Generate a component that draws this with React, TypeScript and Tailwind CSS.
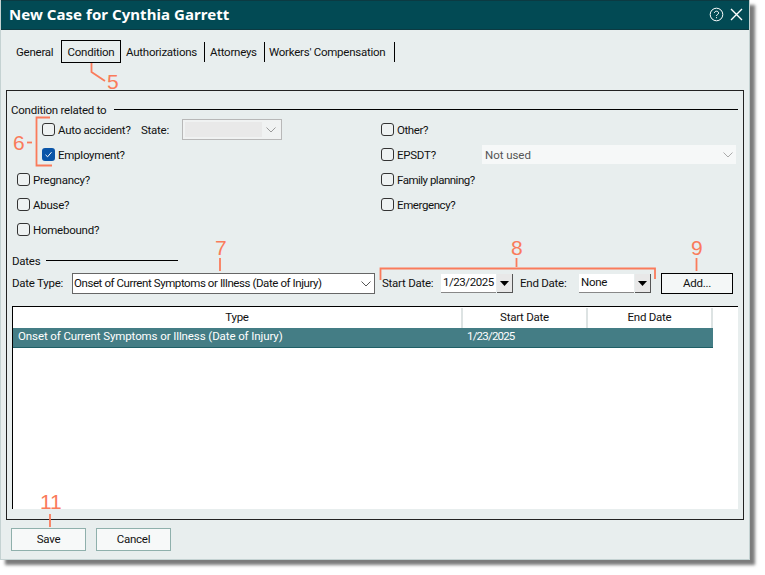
import React from "react";

const ORANGE = "#FA7B5B";

function Check({ label, checked = false, className = "", labelClass = "" }: { label: string; checked?: boolean; className?: string; labelClass?: string }) {
  return (
    <div className={`flex items-center h-[25px] gap-[3px] ${className}`}>
      {checked ? (
        <span className="w-[13px] h-[13px] rounded-[3px] bg-[#0A55A8] flex items-center justify-center shrink-0">
          <svg width="9" height="9" viewBox="0 0 9 9" fill="none" stroke="#fff" strokeWidth="1">
            <path d="M1.5 4.8 L3.6 6.8 L7.5 2.2" />
          </svg>
        </span>
      ) : (
        <span className="w-[13px] h-[13px] rounded-[3px] border border-[#333] bg-[#eef2f2] shrink-0" />
      )}
      <span className={`pt-[2px] ${labelClass}`}>{label}</span>
    </div>
  );
}

function Chevron({ color = "#555" }: { color?: string }) {
  return (
    <svg width="10" height="6" viewBox="0 0 10 6" fill="none" stroke={color} strokeWidth="1" className="shrink-0">
      <path d="M0.5 0.5 L5 5 L9.5 0.5" />
    </svg>
  );
}

function DropButton() {
  return (
    <span className="w-[16px] h-[19px] bg-[#e8e8e8] border-r border-b border-[#555] flex items-center justify-center">
      <svg width="9" height="5" viewBox="0 0 9 5">
        <path d="M0 0 H9 L4.5 5 Z" fill="#000" />
      </svg>
    </span>
  );
}

function Num({ children, className }: { children: React.ReactNode; className: string }) {
  return (
    <span className={`absolute text-[#FA7B5B] text-[21px] leading-[20px] tracking-normal font-['Liberation_Sans',sans-serif] ${className}`}>
      {children}
    </span>
  );
}

export default function App() {
  return (
    <div className="relative w-[765px] h-[575px] bg-white overflow-hidden font-['Roboto','Noto_Sans',sans-serif] text-[11.5px] tracking-[-0.25px] text-[#111] whitespace-nowrap">
      <div className="w-[750px] h-[560px] bg-[#E8EEEE] border-r border-b border-l border-[#C4D2D2] shadow-[5px_5px_3px_#7c7c7c] flex flex-col">
        <div className="h-[30px] shrink-0 bg-[#024A54] border-t border-b border-[#0c3a42] flex items-center justify-between pl-[8px] pr-[6px] pb-[1px] font-['Noto_Sans',sans-serif]">
          <span className="text-white font-bold text-[15px] tracking-[0.05px]">New Case for Cynthia Garrett</span>
          <span className="flex items-center gap-[6px]">
            <svg width="15" height="15" viewBox="0 0 15 15" fill="none" stroke="#fff" strokeWidth="1">
              <circle cx="7.5" cy="7.5" r="6.3" />
              <path d="M5.4 6 C5.4 3.6 9.6 3.6 9.6 6 C9.6 7.5 7.5 7.4 7.5 9" />
              <path d="M7.5 10.2 V11.2" />
            </svg>
            <svg width="13" height="13" viewBox="0 0 13 13" fill="none" stroke="#fff" strokeWidth="1.4">
              <path d="M1 1 L12 12 M12 1 L1 12" />
            </svg>
          </span>
        </div>

        <div className="flex items-center h-[23px] mt-[10px] pl-[15px] shrink-0">
          <span className="w-[45px] pt-[2px]">General</span>
          <span className="w-[60px] h-[23px] border border-black flex items-center justify-center pt-[2px]">Condition</span>
          <span className="w-[84px] pl-[5px] h-[20px] flex items-center border-r border-black pt-[2px]">Authorizations</span>
          <span className="w-[60px] pl-[5px] h-[20px] flex items-center border-r border-black pt-[2px]">Attorneys</span>
          <span className="w-[130px] pl-[4px] h-[20px] flex items-center border-r border-black pt-[2px]">Workers' Compensation</span>
        </div>

        <div className="ml-[5px] mt-[27px] w-[738px] h-[430px] border border-[#222] flex flex-col">
          <div className="flex items-center h-[15px] mt-[11px] pl-[4px] pr-[5px] gap-[6px] shrink-0">
            <span className="w-[97px] pt-[2px]">Condition related to</span>
            <span className="flex-1 h-px bg-black" />
          </div>
          <div className="grid grid-cols-[374px_1fr] shrink-0">
            <div className="flex items-center pl-[35px]">
              <Check label="Auto accident?" className="w-[99px]" />
              <span className="w-[41px] pt-[2px]">State:</span>
              <div className="w-[100px] h-[21px] border border-[#b8b8b8] bg-[#F0F2F2] flex items-center justify-between p-[2px] pr-[5px]">
                <span className="w-[77px] h-[15px] bg-[#E9E9E9]" />
                <Chevron color="#999" />
              </div>
            </div>
            <Check label="Other?" labelClass="tracking-[-0.4px]" />
            <Check label="Employment?" className="pl-[35px]" checked />
            <div className="flex items-center">
              <Check label="EPSDT?" className="w-[101px]" />
              <div className="w-[254px] h-[19px] bg-[#F6F8F8] flex items-center justify-between pl-[3px] pr-[3px] text-[#555] text-[11.5px] tracking-[-0.05px]">
                <span className="pt-[3px]">Not used</span>
                <Chevron color="#aaa" />
              </div>
            </div>
            <Check label="Pregnancy?" className="pl-[10px]" />
            <Check label="Family planning?" labelClass="tracking-[-0.5px]" />
            <Check label="Abuse?" className="pl-[10px]" />
            <Check label="Emergency?" labelClass="tracking-[-0.4px]" />
            <Check label="Homebound?" className="pl-[10px]" />
          </div>

          <div className="flex items-center h-[15px] mt-[11px] pl-[5px] gap-[5px] shrink-0">
            <span className="w-[29px] pt-[2px]">Dates</span>
            <span className="w-[132px] h-px bg-black" />
          </div>
          <div className="flex items-center h-[21px] mt-[5px] pl-[5px] shrink-0">
            <span className="w-[60px] pt-[1px]">Date Type:</span>
            <div className="w-[303px] h-[21px] border border-[#666] bg-white flex items-center justify-between pl-[1px] pr-[3px]">
              <span className="tracking-[-0.42px]">Onset of Current Symptoms or Illness (Date of Injury)</span>
              <Chevron />
            </div>
            <span className="ml-[7px] w-[59px] pt-[1px]">Start Date:</span>
            <span className="w-[55px] h-[19px] bg-white border-b border-[#888] flex items-center pl-[2px] tracking-[-0.45px]">1/23/2025</span>
            <span className="ml-px"><DropButton /></span>
            <span className="ml-[7px] w-[59px] pt-[1px]">End Date:</span>
            <span className="w-[55px] h-[19px] bg-white border-b border-[#888] flex items-center pl-[2px]">None</span>
            <span className="ml-px"><DropButton /></span>
            <span className="ml-[10px] w-[72px] h-[21px] border border-black bg-[#F4F7F7] flex items-center justify-center pt-[1px]">Add...</span>
          </div>

          <div className="ml-[5px] mt-[12px] w-[726px] h-[203px] bg-white border-l border-t border-black shrink-0 flex flex-col">
            <div className="grid grid-cols-[450px_125px_125px] w-[700px] h-[21px] shrink-0 pt-[1px]">
              <span className="flex items-center justify-center border-r-2 border-[#DDE3E3]">Type</span>
              <span className="flex items-center justify-center border-r-2 border-[#DDE3E3]">Start Date</span>
              <span className="flex items-center justify-center border-r-2 border-[#DDE3E3]">End Date</span>
            </div>
            <div className="grid grid-cols-[450px_125px_125px] w-[700px] h-[20px] shrink-0 bg-[#447D85] border-b border-[#1F5F66] text-white pb-[4px]">
              <span className="flex items-center pl-[5px] tracking-[-0.1px]">Onset of Current Symptoms or Illness (Date of Injury)</span>
              <span className="flex items-center pl-[4px] tracking-[-0.8px]">1/23/2025</span>
              <span />
            </div>
          </div>
        </div>

        <div className="flex items-center gap-[10px] ml-[10px] mt-[8px]">
          <span className="w-[75px] h-[23px] border border-[#8FB0AC] bg-[#F7F9F9] flex items-center justify-center">Save</span>
          <span className="w-[75px] h-[23px] border border-[#8FB0AC] bg-[#F7F9F9] flex items-center justify-center">Cancel</span>
        </div>
      </div>

      <svg className="absolute left-0 top-0" width="765" height="575" fill="none" stroke={ORANGE} strokeWidth="1.8">
        <path d="M91.5 63 V72 L105 81" />
        <path d="M27 142.5 H32" />
        <path d="M50 117.5 H36.5 V165.5 H52" />
        <path d="M220 258 V271" />
        <path d="M516.5 258 V267" />
        <path d="M380.5 280 V268.5 H655 V279" />
        <path d="M696.5 258 V271" />
        <path d="M50 514 V527" />
      </svg>
      <Num className="left-[107px] top-[72px]">5</Num>
      <Num className="left-[13px] top-[133px]">6</Num>
      <Num className="left-[215px] top-[238px]">7</Num>
      <Num className="left-[511px] top-[238px]">8</Num>
      <Num className="left-[691px] top-[238px]">9</Num>
      <Num className="left-[40px] top-[492px]">11</Num>
    </div>
  );
}
